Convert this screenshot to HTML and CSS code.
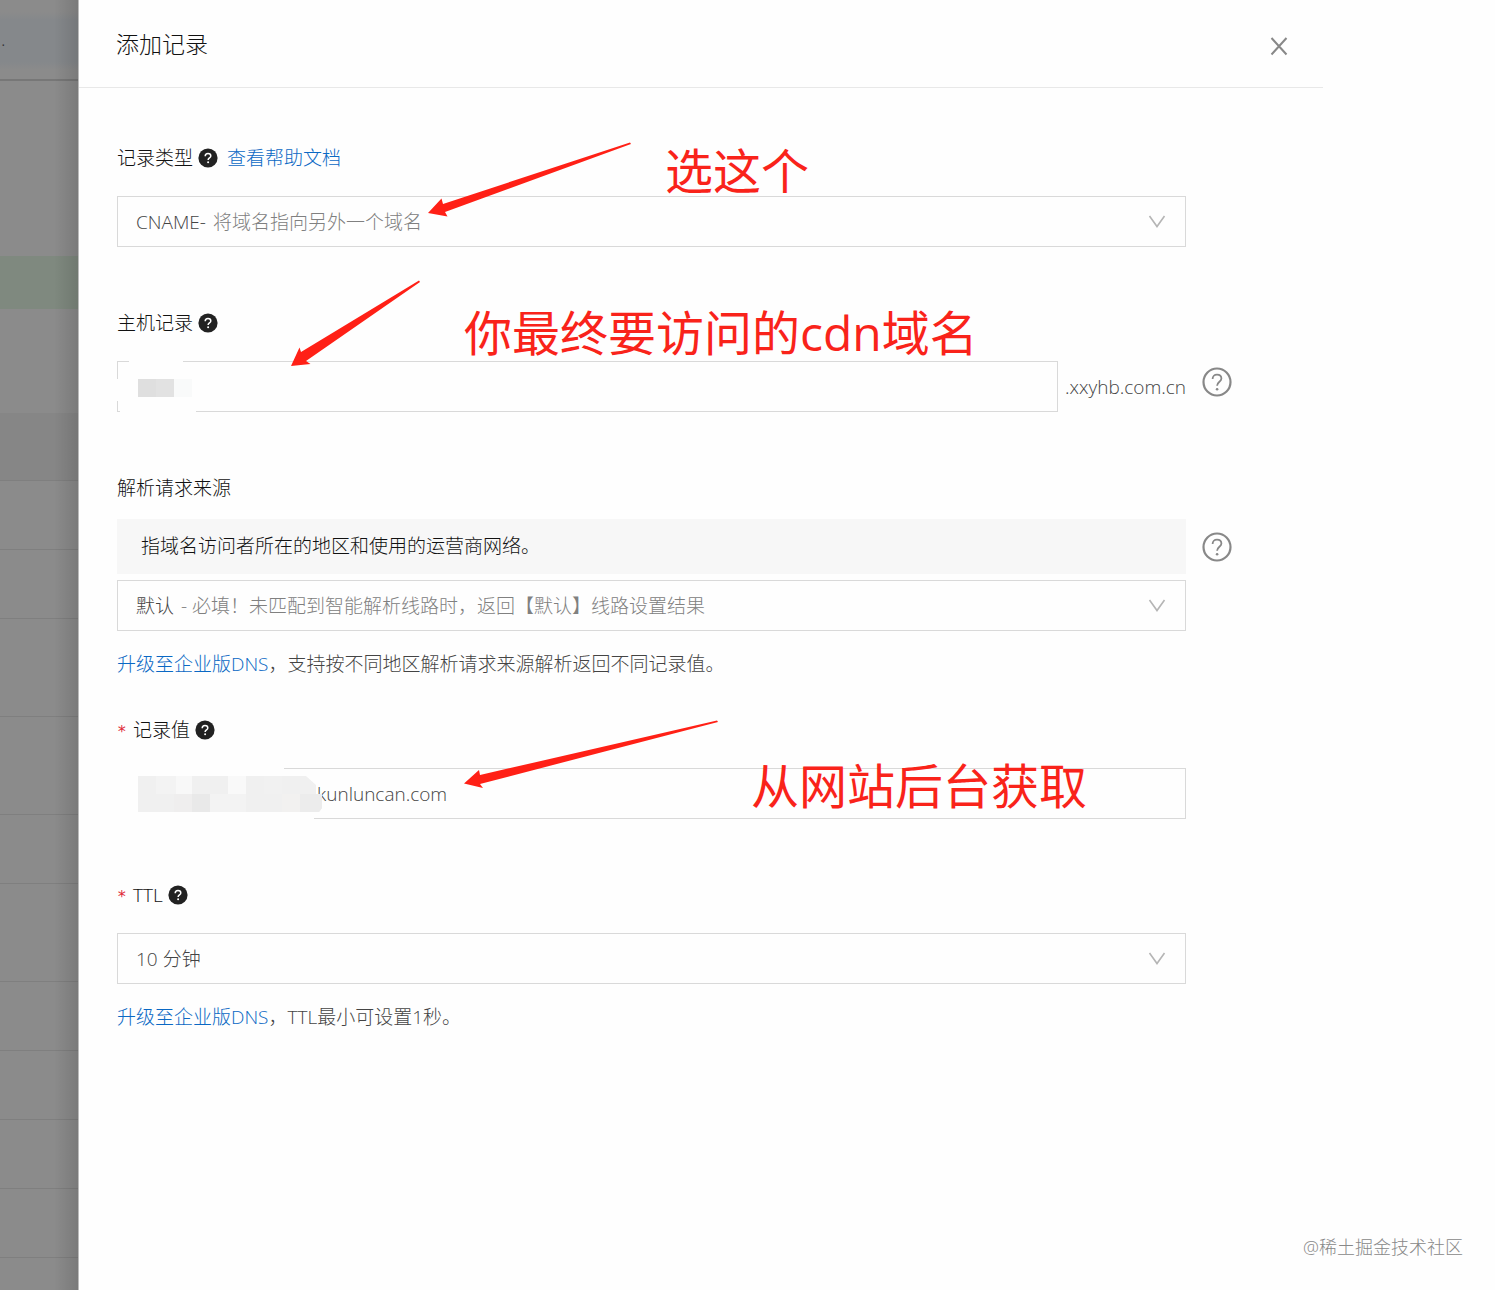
FILE: index.html
```html
<!DOCTYPE html>
<html lang="zh-CN">
<head>
<meta charset="UTF-8">
<meta name="viewport" content="width=device-width, initial-scale=1">
<title>添加记录</title>
<link rel="stylesheet" href="styles.css">
</head>
<body>
  <svg class="defs" aria-hidden="true">
    <symbol id="help-solid" viewBox="0 0 20 20">
      <circle cx="10" cy="10" r="9.6" fill="#222"/>
      <path d="M7.2 8.2c0-1.7 1.2-2.8 2.8-2.8s2.8 1 2.8 2.5c0 2.1-2.7 2-2.7 4.2" fill="none" stroke="#fff" stroke-width="1.5"/>
      <circle cx="10.1" cy="14.3" r="1" fill="#fff"/>
    </symbol>
    <symbol id="help-line" viewBox="0 0 30 30">
      <circle cx="15" cy="15" r="13.5" fill="none" stroke="#888" stroke-width="2.2"/>
      <path d="M10.6 12c0-2.6 1.8-4.3 4.4-4.3s4.4 1.6 4.4 3.9c0 3.2-4.3 3.3-4.3 7.2" fill="none" stroke="#888" stroke-width="1.8"/>
      <circle cx="15.1" cy="22.2" r="1.3" fill="#888"/>
    </symbol>
    <symbol id="chevron" viewBox="0 0 18 14">
      <path d="M1.500 1L9 11.500l7.500-10.500" fill="none" stroke="#b5b5b5" stroke-width="1.6"/>
    </symbol>
  </svg>

  <div class="page">
    <aside class="backdrop">
      <div class="bar"><span>.</span></div>
      <div class="space"></div>
      <div class="tip"></div>
      <div class="space low"></div>
      <div class="row head"></div>
      <div class="row"></div>
      <div class="row"></div>
      <div class="row tall"></div>
      <div class="row tall"></div>
      <div class="row"></div>
      <div class="row tall"></div>
      <div class="row"></div>
      <div class="row"></div>
      <div class="row"></div>
      <div class="row"></div>
    </aside>

    <main class="drawer">
      <header class="drawer-header">
        <h1>添加记录</h1>
        <button class="close" type="button" aria-label="关闭">
          <svg width="18" height="20" viewBox="0 0 18 20"><path d="M1.500 2l15 16.500M16.500 2l-15 16.500" stroke="#888" stroke-width="2" fill="none"/></svg>
        </button>
      </header>

      <form class="form">
        <div class="field">
          <div class="label">
            <label for="type">记录类型</label>
            <svg class="icon"><use href="#help-solid"/></svg>
            <a class="doc" href="#">查看帮助文档</a>
          </div>
          <div class="box">
            <span class="prefix">CNAME-</span>
            <select id="type" class="muted"><option>将域名指向另外一个域名</option></select>
            <svg class="chevron"><use href="#chevron"/></svg>
          </div>
        </div>

        <div class="field">
          <div class="label">
            <label for="host">主机记录</label>
            <svg class="icon"><use href="#help-solid"/></svg>
          </div>
          <div class="host">
            <div class="box">
              <input id="host" type="text">
              <svg class="mosaic" width="90" height="58" viewBox="0 0 90 58">
                <path d="M15 0h54v6h15v36h-2v16H6V44H0V22h15z" fill="#fefefe"/>
                <path d="M60 22h18v18H60z" fill="#f9fafa"/>
                <path d="M24 22h18v18H24z" fill="#dfdfdf"/>
                <path d="M42 22h18v18H42z" fill="#e2e2e2"/>
              </svg>
            </div>
            <span class="suffix">.xxyhb.com.cn</span>
          </div>
          <svg class="help"><use href="#help-line"/></svg>
        </div>

        <div class="field source">
          <div class="label"><label for="line">解析请求来源</label></div>
          <p class="notice">指域名访问者所在的地区和使用的运营商网络。</p>
          <svg class="help"><use href="#help-line"/></svg>
          <div class="box">
            <span class="prefix">默认</span>
            <select id="line" class="muted"><option>- 必填！未匹配到智能解析线路时，返回【默认】线路设置结果</option></select>
            <svg class="chevron"><use href="#chevron"/></svg>
          </div>
          <p class="note"><a href="#">升级至企业版DNS</a>，支持按不同地区解析请求来源解析返回不同记录值。</p>
        </div>

        <div class="field">
          <div class="label">
            <span class="star">*</span>
            <label for="value">记录值</label>
            <svg class="icon"><use href="#help-solid"/></svg>
          </div>
          <div class="box">
            <input id="value" class="value" type="text" value="kunluncan.com">
            <svg class="mosaic wide" width="222" height="66" viewBox="0 0 222 66">
              <path d="M0 0h180v12h30v54H12V56H0z" fill="#fefefe"/>
              <path d="M34 14h168l10 9v9h6v14l-3 4H34z" fill="#f0f0f0"/>
              <path d="M52 14h20v18H52z" fill="#f3f3f3"/>
              <path d="M72 14h16v18H72z" fill="#f8f8f8"/>
              <path d="M70 32h18v18H70z" fill="#efeeee"/>
              <path d="M88 32h18v18H88z" fill="#e9e9e9"/>
              <path d="M124 14h18v18h-18z" fill="#f9f9f9"/>
              <path d="M106 32h36v18h-36z" fill="#f3f3f3"/>
              <path d="M160 14h18v18h-18z" fill="#f1f1f1"/>
              <path d="M178 32h18v18h-18z" fill="#f2f1f0"/>
              <path d="M196 32h22v14l-3 4h-19z" fill="#ececec"/>
            </svg>
          </div>
        </div>

        <div class="field">
          <div class="label">
            <span class="star">*</span>
            <label for="ttl">TTL</label>
            <svg class="icon"><use href="#help-solid"/></svg>
          </div>
          <div class="box">
            <select id="ttl"><option>10 分钟</option></select>
            <svg class="chevron"><use href="#chevron"/></svg>
          </div>
          <p class="note"><a href="#">升级至企业版DNS</a>，TTL最小可设置1秒。</p>
        </div>
      </form>
    </main>

    <!-- hand-drawn notes over the form -->
    <svg class="arrows" width="760" height="800" viewBox="0 0 760 800" fill="#ff2016">
      <path d="M428 213l13.500-14.500 1.500 5.500L630 142.500l1 1.500L445 212l2.500 4.500z"/>
      <path d="M291 366l8.500-18.500 1.500 4.500L419 280.500l1 1.500L306 361l4.500 3z"/>
      <path d="M464 783.500l15-13.500 1 5L717 720.500l1 1.500L480 784l3 4z"/>
    </svg>
    <span class="mark mark-type">选这个</span>
    <span class="mark mark-host">你最终要访问的cdn域名</span>
    <span class="mark mark-value">从网站后台获取</span>
    <span class="watermark">@稀土掘金技术社区</span>
  </div>
</body>
</html>
```

FILE: styles.css
```css
* {
  box-sizing: border-box;
}
body {
  margin: 0;
  font-family: "Open Sans", "Noto Sans CJK SC", sans-serif;
  font-size: 19px;
  font-weight: 300;
  line-height: 30px;
  color: #111;
  background: #fefefe;
}
h1, p {
  margin: 0;
}
a {
  color: #0a68c4;
  text-decoration: none;
}
svg {
  display: block;
  flex: none;
}
.defs {
  position: absolute;
  width: 0;
  height: 0;
}
.page {
  position: relative;
  display: flex;
  min-height: 100vh;
}

/* dimmed page behind the drawer */
.backdrop {
  position: relative;
  flex: 0 0 79px;
  background: #8b8b8b;
}
.backdrop::after {
  content: "";
  position: absolute;
  top: 0;
  right: 0;
  bottom: 0;
  width: 24px;
  border-right: 1px solid #bbb;
  background: linear-gradient(to right, rgba(0,0,0,0), rgba(0,0,0,0.12));
}
.bar {
  height: 81px;
  padding: 24px 1px;
  color: #333;
  border-bottom: 2px solid #777;
  background: linear-gradient(#8b8b8b 12px, #85888b 20px, #85888b 62px, #8b8b8b 70px);
}
.space {
  height: 175px;
}
.tip {
  height: 53px;
  background: #7f897f;
}
.low {
  height: 104px;
}
.row {
  height: 69px;
  border-bottom: 1px solid #7f7f7f;
}
.row.head {
  height: 68px;
  background: #868686;
}
.row.tall {
  height: 98px;
}

.drawer {
  flex: 1;
  max-width: 1244px;
}
.drawer-header {
  display: flex;
  justify-content: space-between;
  align-items: center;
  height: 88px;
  padding: 0 35px 0 37px;
  border-bottom: 1px solid #e8e8e8;
}
.drawer-header h1 {
  font-size: 23px;
  font-weight: 300;
}
.close {
  padding: 4px 0 0;
  border: 0;
  background: none;
  cursor: pointer;
}
.form {
  padding: 55px 92px 40px 38px;
}
.field {
  display: grid;
  grid-template-columns: 1fr 29px;
  column-gap: 16px;
  margin-bottom: 61px;
}
.field > * {
  grid-column: 1;
}
.label {
  display: flex;
  align-items: center;
  height: 30px;
  margin-bottom: 23px;
}
.icon {
  width: 20px;
  height: 20px;
  margin-left: 5px;
}
.doc {
  margin-left: 9px;
}
.star {
  width: 16px;
  padding-top: 4px;
  font-family: "DejaVu Sans Mono", monospace;
  font-size: 16px;
  color: #e02a3a;
}
.box {
  position: relative;
  display: flex;
  align-items: center;
  height: 51px;
  padding: 0 19px 0 18px;
  border: 1px solid #d9d9d9;
  color: #444;
}
.box input,
.box select {
  flex: 1;
  min-width: 0;
  height: 100%;
  padding: 0;
  border: 0;
  outline: 0;
  background: none;
  color: #444;
  font: inherit;
  appearance: none;
}
.box .muted {
  color: #808080;
}
.prefix {
  margin-right: 7px;
}
.chevron {
  width: 18px;
  height: 14px;
}
.box .value {
  padding-left: 181px;
}
.mosaic {
  position: absolute;
  top: -5px;
  left: -4px;
}
.mosaic.wide {
  top: -7px;
  left: -14px;
}
.host {
  display: flex;
  align-items: center;
  gap: 7px;
}
.host .box {
  flex: 1;
}
.suffix {
  color: #444;
}
.field > .help {
  grid-column: 2;
  width: 30px;
  height: 30px;
  margin-top: 6px;
}
.source {
  margin-bottom: 36px;
}
.source .label {
  margin-bottom: 16px;
}
.source > .help {
  margin-top: 13px;
}
.host + .help {
  grid-row: 2;
}
.notice {
  height: 55px;
  margin-bottom: 6px;
  padding: 0 24px;
  line-height: 55px;
  background: #f7f7f7;
}
.notice + .help {
  grid-row: 2;
}
.note {
  margin-top: 18px;
  color: #444;
}

.arrows {
  position: absolute;
  top: 0;
  left: 0;
  pointer-events: none;
}
.mark {
  position: absolute;
  color: #f9231a;
  font-size: 48px;
  font-weight: 400;
  line-height: 60px;
  white-space: nowrap;
}
.mark-type {
  top: 141px;
  left: 665px;
}
.mark-host {
  top: 303px;
  left: 464px;
}
.mark-value {
  top: 756px;
  left: 751px;
}
.watermark {
  position: absolute;
  right: 32px;
  bottom: 28px;
  font-size: 18px;
  color: #888;
}
```
